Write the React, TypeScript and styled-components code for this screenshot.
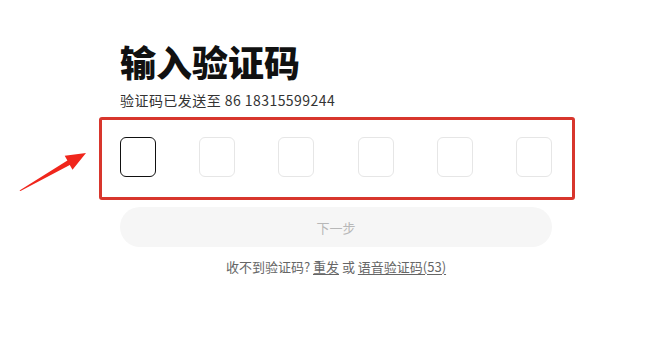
import React from 'react';
import styled, { createGlobalStyle } from 'styled-components';

const GlobalStyle = createGlobalStyle`
  html, body {
    margin: 0;
    padding: 0;
    background: #fff;
  }
  body {
    font-family: "Noto Sans CJK SC", "Noto Sans", sans-serif;
    color: #222;
  }
`;

const Page = styled.main`
  position: relative;
  width: 653px;
  height: 357px;
  overflow: hidden;
  padding: 39px 0 0 120px;
  box-sizing: border-box;
`;

const Column = styled.div`
  width: 432px;
  display: flex;
  flex-direction: column;
`;

const Title = styled.h1`
  margin: 0;
  font-size: 36px;
  line-height: 44px;
  font-weight: 900;
  color: #111;
`;

const Sub = styled.p`
  margin: 7px 0 0;
  font-size: 14px;
  letter-spacing: 0.45px;
  line-height: 20px;
  color: #333;
`;

// annotation frame drawn around the inputs in the screenshot
const Frame = styled.div`
  margin: 7px -23px 0 -21px;
  padding: 17px 20px 20px 18px;
  border: 3px solid #d8362d;
  border-radius: 3px;
`;

const CodeRow = styled.div`
  display: flex;
  justify-content: space-between;
`;

const Cell = styled.div<{ $active?: boolean }>`
  width: 36px;
  height: 40px;
  box-sizing: border-box;
  border-radius: 6px;
  border: ${p => (p.$active ? '1.5px solid #111' : '1px solid #e6e6e6')};
  background: #fff;
`;

const NextButton = styled.button`
  margin-top: 7px;
  height: 40px;
  border: none;
  border-radius: 20px;
  background: #f6f6f6;
  color: #b8b8b8;
  font-family: inherit;
  font-size: 13px;
  cursor: not-allowed;
`;

const Footer = styled.p`
  margin: 10px 0 0;
  text-align: center;
  font-size: 13px;
  line-height: 20px;
  color: #666;
`;

const Link = styled.a`
  color: #666;
  text-decoration: underline;
  text-underline-offset: 2px;
`;

const Arrow = styled.svg`
  position: absolute;
  left: 0;
  top: 0;
`;

export default function App() {
  return (
    <>
      <GlobalStyle />
      <Page>
        <Arrow width="100" height="200" viewBox="0 0 100 200">
          <polygon
            points="19.5,190.5 67.4,160.6 64.7,155.8 86,153 72.5,169.8 69.8,165 20.5,191"
            fill="#f0261c"
          />
        </Arrow>
        <Column>
          <Title>输入验证码</Title>
          <Sub>验证码已发送至 86 18315599244</Sub>
          <Frame>
            <CodeRow>
              {[0, 1, 2, 3, 4, 5].map(i => (
                <Cell key={i} $active={i === 0} />
              ))}
            </CodeRow>
          </Frame>
          <NextButton disabled>下一步</NextButton>
          <Footer>
            收不到验证码? <Link>重发</Link> 或 <Link>语音验证码(53)</Link>
          </Footer>
        </Column>
      </Page>
    </>
  );
}
